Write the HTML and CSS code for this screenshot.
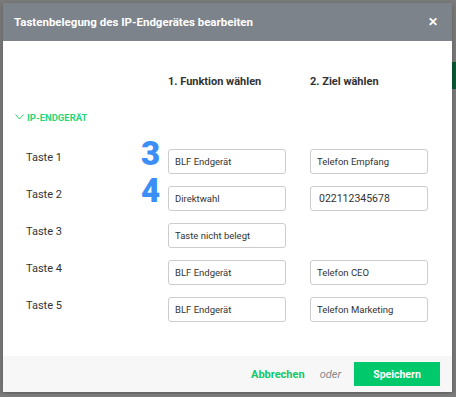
FILE: index.html
```html
<!DOCTYPE html>
<html lang="de">
<head>
  <meta charset="UTF-8">
  <meta name="viewport" content="width=device-width, initial-scale=1.0">
  <title>Tastenbelegung</title>
  <link rel="stylesheet" href="styles.css">
</head>
<body>
  <div class="backdrop-bar"></div>

  <div class="modal">
    <div class="modal-header">
      <h2>Tastenbelegung des IP-Endgerätes bearbeiten</h2>
      <span class="close">&#10005;</span>
    </div>

    <div class="modal-body">
      <div class="col-heads">
        <span></span>
        <span>1. Funktion wählen</span>
        <span>2. Ziel wählen</span>
      </div>

      <div class="section-toggle">
        <svg width="9" height="6" viewBox="0 0 9 6"><path d="M0.5 0.5 L4.5 5 L8.5 0.5" fill="none" stroke="#2bd67b" stroke-width="1"/></svg>
        IP-ENDGERÄT
      </div>

      <div class="keys">
        <div class="key-label">Taste 1</div>
        <div class="field"><span class="step">3</span>BLF Endgerät</div>
        <div class="field">Telefon Empfang</div>

        <div class="key-label">Taste 2</div>
        <div class="field"><span class="step">4</span>Direktwahl</div>
        <div class="field number">022112345678</div>

        <div class="key-label">Taste 3</div>
        <div class="field">Taste nicht belegt</div>
        <div></div>

        <div class="key-label">Taste 4</div>
        <div class="field">BLF Endgerät</div>
        <div class="field">Telefon CEO</div>

        <div class="key-label">Taste 5</div>
        <div class="field">BLF Endgerät</div>
        <div class="field">Telefon Marketing</div>
      </div>
    </div>

    <div class="modal-footer">
      <a class="cancel" href="#">Abbrechen</a>
      <span class="or">oder</span>
      <button type="button">Speichern</button>
    </div>
  </div>
</body>
</html>
```

FILE: styles.css
```css
/* General Styles */
body {
  font-family: 'Roboto', 'Liberation Sans', sans-serif;
  background-color: #7b7b7b;
  color: #333;
  margin: 0;
  padding: 3px 0 0 3px;
  position: relative;
  min-height: 394px;
  box-sizing: border-box;
}

/* page content showing through the overlay */
.backdrop-bar {
  position: absolute;
  right: 0;
  top: 62px;
  width: 8px;
  height: 27px;
  background-color: #0b5a34;
}

/* Modal */
.modal {
  position: relative;
  width: 449px;
  background-color: #fff;
  box-shadow: 0 2px 6px rgba(0, 0, 0, 0.25);
}

.modal-header {
  background-color: #7c838a;
  height: 38px;
  padding: 0 14px 0 11px;
  display: flex;
  align-items: center;
  justify-content: space-between;
}

.modal-header h2 {
  margin: 0;
  color: #fff;
  font-size: 11.5px;
  font-weight: 700;
}

.close {
  color: #fff;
  font-size: 12px;
  font-weight: 700;
}

.modal-body {
  padding: 34px 23px 0 23px;
  height: 281px;
}

.col-heads,
.keys {
  display: grid;
  grid-template-columns: 118px 118px 118px;
  column-gap: 24px;
}

.col-heads span {
  font-size: 11px;
  font-weight: 700;
  color: #333;
}

/* Section toggle */
.section-toggle {
  margin: 24px 0 0 -11px;
  color: #2bd67b;
  font-size: 9.5px;
  font-weight: 700;
  display: flex;
  align-items: center;
  gap: 3px;
}

.section-toggle svg {
  margin-top: -2px;
}

/* Key rows */
.keys {
  margin-top: 26px;
  row-gap: 12px;
}

.key-label {
  font-size: 11px;
  padding-top: 2px;
  color: #333;
}

.field {
  position: relative;
  height: 25px;
  border: 1px solid #ccc;
  border-radius: 3px;
  box-sizing: border-box;
  padding-left: 6px;
  display: flex;
  align-items: center;
  font-size: 9.5px;
  color: #333;
}

.field.number {
  padding-left: 8px;
  font-size: 10.5px;
}

.step {
  position: absolute;
  left: -28px;
  top: -13px;
  color: #3a8ef6;
  font-size: 33px;
  font-weight: 900;
  line-height: 1;
}

/* Footer */
.modal-footer {
  background-color: #f7f7f7;
  height: 36px;
  padding: 0 12px;
  display: flex;
  align-items: center;
  justify-content: flex-end;
}

.cancel {
  color: #13c76a;
  font-size: 11px;
  font-weight: 700;
  text-decoration: none;
}

.or {
  color: #888;
  font-style: italic;
  font-size: 11px;
  margin: 0 13px 0 15px;
}

button {
  background-color: #00c96b;
  color: #fff;
  border: none;
  width: 86px;
  height: 24px;
  font-family: inherit;
  font-size: 10.5px;
  font-weight: 700;
  cursor: pointer;
}
```
